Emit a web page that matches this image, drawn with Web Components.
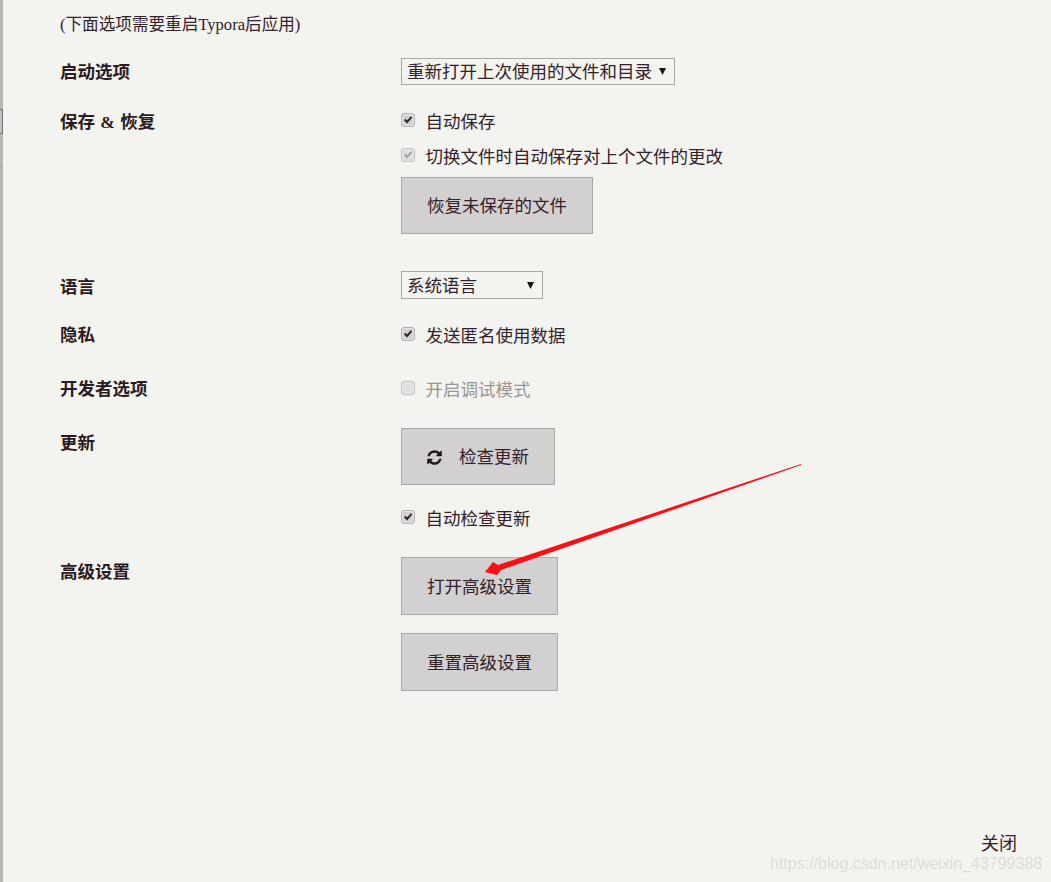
<!DOCTYPE html>
<html lang="zh">
<head>
<meta charset="utf-8">
<title>Typora 偏好设置</title>
<style>
  html, body { margin: 0; height: 100%; background: #f3f3ef; }
  body { font: 17.5px/24px "Liberation Serif", "Noto Sans CJK SC", serif; color: #33222a; overflow: hidden; }
</style>
</head>
<body>
<pref-page>
  <pref-note>(下面选项需要重启Typora后应用)</pref-note>

  <pref-row label="启动选项" style="--row-gap:21px;--label-top:2px">
    <pref-select width="274" style="--h:27px">重新打开上次使用的文件和目录</pref-select>
  </pref-row>

  <pref-row label="保存 &amp; 恢复" style="--row-gap:24px;--label-top:1px">
    <pref-check checked>自动保存</pref-check>
    <pref-check checked disabled style="margin-top:11px">切换文件时自动保存对上个文件的更改</pref-check>
    <pref-button style="margin-top:9px">恢复未保存的文件</pref-button>
  </pref-row>

  <pref-row label="语言" style="--row-gap:37px;--label-top:4px">
    <pref-select width="142" style="--h:28px">系统语言</pref-select>
  </pref-row>

  <pref-row label="隐私" style="--row-gap:24px;--label-top:0px">
    <pref-check checked>发送匿名使用数据</pref-check>
  </pref-row>

  <pref-row label="开发者选项" style="--row-gap:30px;--label-top:0px">
    <pref-check disabled>开启调试模式</pref-check>
  </pref-row>

  <pref-row label="更新" style="--row-gap:27px;--label-top:3px">
    <pref-button icon="refresh" style="width:154px">检查更新</pref-button>
    <pref-check checked style="margin-top:21px">自动检查更新</pref-check>
  </pref-row>

  <pref-row label="高级设置" style="--row-gap:27px;--label-top:3px">
    <pref-button style="--btn-h:58px">打开高级设置</pref-button>
    <pref-button style="--btn-h:58px;margin-top:18px">重置高级设置</pref-button>
  </pref-row>

  <pref-close>关闭</pref-close>
</pref-page>
<red-arrow></red-arrow>
<water-mark>https://blog.csdn.net/weixin_43799388</water-mark>

<script>
class PrefPage extends HTMLElement {
  constructor() {
    super();
    this.attachShadow({ mode: "open" });
    this.shadowRoot.innerHTML = `
    <style>
      :host {
        display: flex;
        flex-direction: column;
        box-sizing: border-box;
        height: 882px;
        padding: 13px 34px 26px 57px;
        border-left: 3px solid #b6b6b4;
        position: relative;
      }
      /* bits of the window behind, they stick out on the left edge */
      .behind { position: absolute; left: -3px; width: 3px; box-sizing: border-box; }
      .box { top: 109px; height: 25px; border: 1px solid #7d6d72; border-left: 0; background: #c2c2c0; }
      .line { top: 167px; height: 1px; background: #a5a5a3; }
    </style>
    <div class="behind box"></div>
    <div class="behind line"></div>
    <slot></slot>
    `;
  }
}

class PrefNote extends HTMLElement {
  constructor() {
    super();
    this.attachShadow({ mode: "open" });
    this.shadowRoot.innerHTML = `
    <style>
      :host { display: block; font-size: 16.6px; line-height: 24px; }
    </style>
    <slot></slot>
    `;
  }
}

class PrefRow extends HTMLElement {
  constructor() {
    super();
    this.attachShadow({ mode: "open" });
    this.shadowRoot.innerHTML = `
    <style>
      :host {
        display: grid;
        grid-template-columns: 341px 1fr;
        margin-top: var(--row-gap, 24px);
      }
      #label {
        font-weight: bold;
        padding-top: var(--label-top, 0);
        color: #2b1a20;
        word-spacing: 1px;
      }
      #controls { display: flex; flex-direction: column; align-items: flex-start; }
    </style>
    <div id="label"></div>
    <div id="controls"><slot></slot></div>
    `;
  }
  connectedCallback() {
    this.shadowRoot.querySelector("#label").textContent = this.getAttribute("label");
  }
}

class PrefSelect extends HTMLElement {
  constructor() {
    super();
    this.attachShadow({ mode: "open" });
    this.shadowRoot.innerHTML = `
    <style>
      :host {
        display: flex;
        align-items: center;
        justify-content: space-between;
        box-sizing: border-box;
        height: var(--h, 27px);
        padding: 1px 8px 0 5px;
        border: 1px solid #a9a8a6;
        background: #f3f3ef;
        white-space: nowrap;
      }
      svg { margin-top: -1px; }
    </style>
    <slot></slot>
    <svg width="7" height="7" viewBox="0 0 7 7"><path d="M0 0h7L3.5 7z" fill="#1c1214"/></svg>
    `;
  }
  connectedCallback() {
    this.style.width = this.getAttribute("width") + "px";
  }
}

class PrefCheck extends HTMLElement {
  constructor() {
    super();
    this.attachShadow({ mode: "open" });
    this.shadowRoot.innerHTML = `
    <style>
      :host { display: flex; height: 24px; white-space: nowrap; }
      #box {
        box-sizing: border-box;
        width: 14px;
        height: 14px;
        margin: 4px 11px 0 0;
        border: 1px solid #b5b1b1;
        border-radius: 3px;
        background: #d3d0d0;
        box-shadow: inset 0 0 0 1px #e8e6e5;
      }
      #box svg { display: none; width: 12px; height: 12px; }
      :host([checked]) #box svg { display: block; }
      #tick { fill: #2e2226; }
      :host([disabled]) #box { background: #e2e0de; border-color: #c6c3c2; }
      :host([disabled]) #tick { fill: #a5a3a3; }
      :host([disabled]:not([checked])) #text { color: #9a9694; }
      #text { position: relative; top: 1px; margin-left: -0.5px; }
    </style>
    <div id="box"><svg viewBox="0 0 12 12"><path id="tick" d="M2 6.2l1.5-1.4 1.6 1.7L8.8 2.3l1.4 1.2-5.1 6z"/></svg></div>
    <span id="text"><slot></slot></span>
    `;
  }
}

class PrefButton extends HTMLElement {
  constructor() {
    super();
    this.attachShadow({ mode: "open" });
    this.shadowRoot.innerHTML = `
    <style>
      :host {
        display: flex;
        align-items: center;
        box-sizing: border-box;
        height: var(--btn-h, 57px);
        padding: 1px 25px 0;
        border: 1px solid #a9a8a6;
        background: #d2d0d0;
        white-space: nowrap;
      }
      svg { width: 17px; height: 17px; margin-right: 16px; margin-left: -1px; display: none; fill: #21161a; }
      :host([icon]) svg { display: block; }
    </style>
    <svg viewBox="0 0 1792 1792"><path d="M1639 1056q0 5-1 7-64 268-268 434.5t-478 166.5q-146 0-282.5-55t-243.5-157l-129 129q-19 19-45 19t-45-19-19-45v-448q0-26 19-45t45-19h448q26 0 45 19t19 45-19 45l-137 137q71 66 161 102t187 36q134 0 250-65t186-179q11-17 53-117 8-23 30-23h192q13 0 22.5 9.5t9.5 22.5zm25-800v448q0 26-19 45t-45 19h-448q-26 0-45-19t-19-45 19-45l138-138q-148-137-349-137-134 0-250 65t-186 179q-11 17-53 117-8 23-30 23h-199q-13 0-22.5-9.5t-9.5-22.5v-7q65-268 270-434.5t480-166.5q146 0 284 55.5t245 156.5l130-129q19-19 45-19t45 19 19 45z"/></svg>
    <slot></slot>
    `;
  }
}

class PrefClose extends HTMLElement {
  constructor() {
    super();
    this.attachShadow({ mode: "open" });
    this.shadowRoot.innerHTML = `
    <style>
      :host { display: block; margin-top: auto; align-self: flex-end; font-size: 18px; line-height: 24px; }
    </style>
    <slot></slot>
    `;
  }
}

// annotation drawn on the screenshot, it lies over the page
class RedArrow extends HTMLElement {
  constructor() {
    super();
    this.attachShadow({ mode: "open" });
    this.shadowRoot.innerHTML = `
    <style>
      :host { position: absolute; left: 0; top: 0; pointer-events: none; }
      svg { display: block; }
    </style>
    <svg width="1051" height="882" viewBox="0 0 1051 882">
      <polygon points="485,572 493,562 498,565 801,464 801,465 501,570 497,575" fill="#fb0f12"/>
    </svg>
    `;
  }
}

class WaterMark extends HTMLElement {
  constructor() {
    super();
    this.attachShadow({ mode: "open" });
    this.shadowRoot.innerHTML = `
    <style>
      :host {
        position: absolute;
        left: 770px;
        top: 852px;
        font: 16px/24px "Liberation Sans", sans-serif;
        color: rgba(120, 120, 120, 0.2);
        white-space: nowrap;
      }
    </style>
    <slot></slot>
    `;
  }
}

customElements.define("pref-page", PrefPage);
customElements.define("pref-note", PrefNote);
customElements.define("pref-row", PrefRow);
customElements.define("pref-select", PrefSelect);
customElements.define("pref-check", PrefCheck);
customElements.define("pref-button", PrefButton);
customElements.define("pref-close", PrefClose);
customElements.define("red-arrow", RedArrow);
customElements.define("water-mark", WaterMark);
</script>
</body>
</html>
